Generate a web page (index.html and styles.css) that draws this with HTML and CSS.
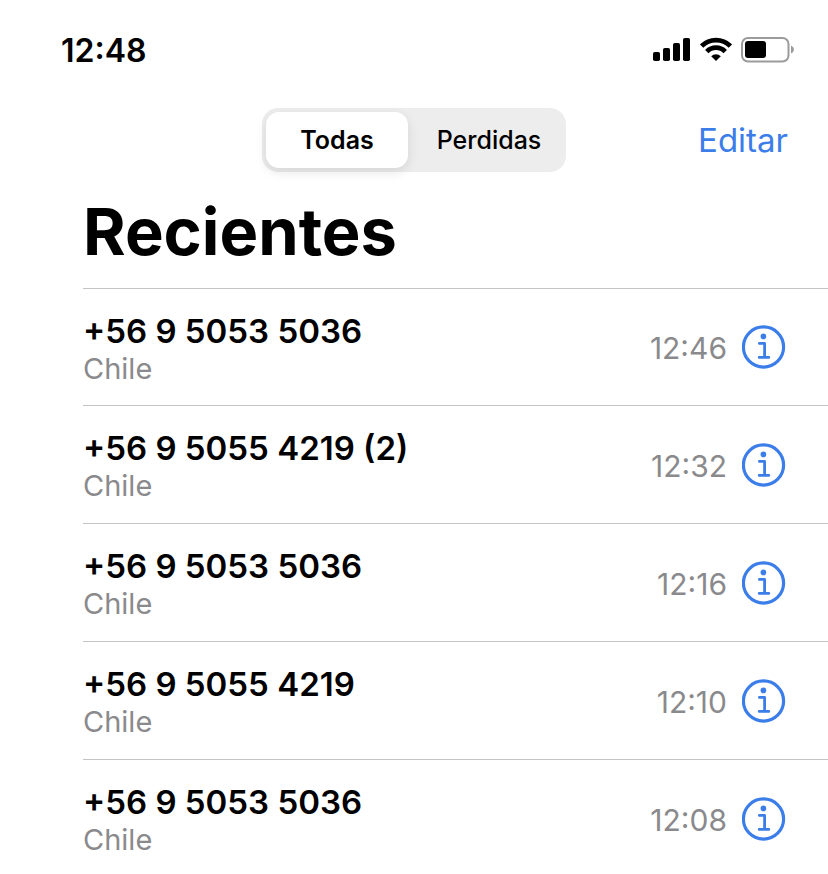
FILE: index.html
```html
<!DOCTYPE html>
<html lang="es">
<head>
  <meta charset="UTF-8">
  <meta name="viewport" content="width=device-width, initial-scale=1.0">
  <title>Recientes</title>
  <link rel="stylesheet" href="styles.css">
</head>
<body>
  <svg class="sprite" aria-hidden="true">
    <symbol id="info" viewBox="0 0 44 44">
      <circle cx="21.5" cy="22" r="20.1" fill="none" stroke="currentColor" stroke-width="3.2"/>
      <circle cx="21.4" cy="11.4" r="2.8" fill="currentColor"/>
      <path d="M17.4 18.4H22.6V32M17.2 32.4H26.8" fill="none" stroke="currentColor" stroke-width="2.8" stroke-linecap="round" stroke-linejoin="round"/>
    </symbol>
  </svg>

  <div class="status-bar">
    <span class="clock">12:48</span>
    <div class="status-icons">
      <svg width="38" height="26" viewBox="0 0 38 26">
        <rect x="0" y="15" width="7" height="9" rx="1.8"/>
        <rect x="10" y="11" width="7" height="13" rx="1.8"/>
        <rect x="20" y="6" width="7" height="18" rx="1.8"/>
        <rect x="30" y="1" width="7" height="23" rx="1.8"/>
      </svg>
      <svg width="32" height="26" viewBox="0 0 32 26">
        <path d="M1.6 9A20.4 20.4 0 0 1 30.4 9M6.8 14.6A12.8 12.8 0 0 1 25.2 14.6" fill="none" stroke="#000" stroke-width="4.8"/>
        <path d="M16 24L11.2 19.3A6.8 6.8 0 0 1 20.8 19.3Z"/>
      </svg>
      <svg width="54" height="26" viewBox="0 0 54 26">
        <rect x="1" y="1" width="46.5" height="23.5" rx="6" fill="none" stroke="#9b9b9b" stroke-width="2"/>
        <rect x="4" y="4" width="21" height="17" rx="3"/>
        <path d="M50 8.5Q53 10 53 12.5T50 16.5Z" fill="#9b9b9b"/>
      </svg>
    </div>
  </div>

  <header class="top-bar">
    <div class="segments">
      <button class="segment active" type="button" aria-pressed="true">Todas</button>
      <button class="segment" type="button" aria-pressed="false">Perdidas</button>
    </div>
    <button class="edit-button" type="button">Editar</button>
  </header>

  <main class="recents">
    <h1>Recientes</h1>
    <ul class="calls">
      <li class="call">
        <div class="caller">
          <div class="number">+56 9 5053 5036</div>
          <div class="place">Chile</div>
        </div>
        <time class="time">12:46</time>
        <button class="info-button" type="button" aria-label="Info"><svg><use href="#info"/></svg></button>
      </li>
      <li class="call">
        <div class="caller">
          <div class="number">+56 9 5055 4219 (2)</div>
          <div class="place">Chile</div>
        </div>
        <time class="time">12:32</time>
        <button class="info-button" type="button" aria-label="Info"><svg><use href="#info"/></svg></button>
      </li>
      <li class="call">
        <div class="caller">
          <div class="number">+56 9 5053 5036</div>
          <div class="place">Chile</div>
        </div>
        <time class="time">12:16</time>
        <button class="info-button" type="button" aria-label="Info"><svg><use href="#info"/></svg></button>
      </li>
      <li class="call">
        <div class="caller">
          <div class="number">+56 9 5055 4219</div>
          <div class="place">Chile</div>
        </div>
        <time class="time">12:10</time>
        <button class="info-button" type="button" aria-label="Info"><svg><use href="#info"/></svg></button>
      </li>
      <li class="call">
        <div class="caller">
          <div class="number">+56 9 5053 5036</div>
          <div class="place">Chile</div>
        </div>
        <time class="time">12:08</time>
        <button class="info-button" type="button" aria-label="Info"><svg><use href="#info"/></svg></button>
      </li>
    </ul>
  </main>
</body>
</html>
```
FILE: styles.css
```css
* {
  box-sizing: border-box;
}

body {
  margin: 0;
  background-color: #fff;
  color: #000;
  font-family: Inter, "Liberation Sans", sans-serif;
}

button {
  padding: 0;
  border: none;
  background: none;
  font-family: inherit;
  cursor: pointer;
}

.sprite {
  display: none;
}

.status-bar {
  display: flex;
  justify-content: space-between;
  align-items: center;
  height: 100px;
  padding: 0 33px 0 61px;
}

.clock {
  font-size: 32px;
  font-weight: 600;
}

.status-icons {
  display: flex;
  gap: 9px;
}

.top-bar {
  display: grid;
  grid-template-columns: 1fr 304px 1fr;
  align-items: center;
  padding: 8px 40px 0;
}

.segments {
  grid-column: 2;
  display: grid;
  grid-template-columns: 142px 1fr;
  column-gap: 8px;
  height: 64px;
  padding: 4px;
  border-radius: 16px;
  background-color: #ededee;
}

.segment {
  border-radius: 13px;
  color: #000;
  font-size: 25px;
  font-weight: 500;
}

.segment.active {
  background-color: #fff;
  box-shadow: 0 4px 12px rgba(0, 0, 0, 0.1);
  font-weight: 600;
}

.edit-button {
  justify-self: end;
  color: #3b7de9;
  font-size: 33px;
}

.recents {
  padding-left: 83px;
}

h1 {
  margin: 0;
  padding: 20px 0 16px;
  font-size: 65px;
  font-weight: 700;
  line-height: 80px;
}

.calls {
  margin: 0;
  padding: 0;
  list-style: none;
}

.call {
  display: flex;
  align-items: center;
  height: 118px;
  padding-right: 42px;
  border-top: 1px solid #c4c4c6;
}

.call:first-child {
  height: 117px;
}

.caller {
  flex: 1;
  padding-top: 3px;
}

.number {
  font-size: 33px;
  font-weight: 600;
  line-height: 40px;
}

.place {
  color: #8a8a8d;
  font-size: 29px;
  line-height: 36px;
}

.time {
  margin-right: 15px;
  padding-top: 2px;
  color: #8a8a8d;
  font-size: 30px;
}

.info-button {
  width: 44px;
  height: 44px;
  color: #3b7de9;
}

.info-button svg {
  display: block;
  width: 44px;
  height: 44px;
}
```
